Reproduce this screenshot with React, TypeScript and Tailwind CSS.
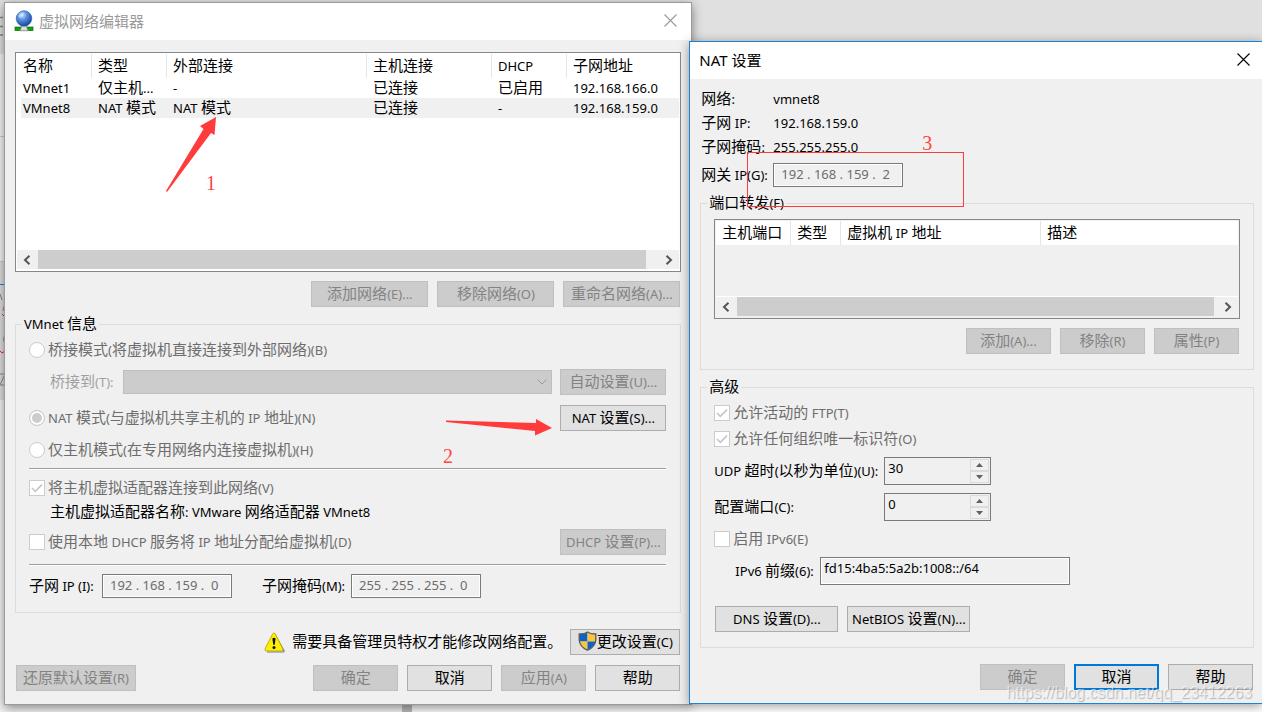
import { ReactNode } from "react";
import clsx from "clsx";

// Latin runs are set a little smaller than the Chinese text around them
const Txt = ({ children }: { children: string }) => (
  <>
    {children.split(/([\x20-\x7e]+)/).map((part, index) =>
      /^[\x20-\x7e]+$/.test(part) ? (
        <span key={index} className="text-[13px] leading-none">
          {part}
        </span>
      ) : (
        part
      )
    )}
  </>
);

const Button = ({
  label,
  width,
  disabled,
  primary,
  icon,
}: {
  label: string;
  width: string;
  disabled?: boolean;
  primary?: boolean;
  icon?: ReactNode;
}) => (
  <button
    type="button"
    disabled={disabled}
    className={clsx(
      "flex h-[26px] shrink-0 items-center justify-center whitespace-pre pb-0.5",
      width,
      disabled && "border border-[#bfbfbf] bg-[#cccccc] text-[#838383]",
      !disabled && !primary && "border border-[#adadad] bg-[#e1e1e1]",
      primary && "border-2 border-[#0078d7] bg-[#e1e1e1]"
    )}
  >
    {icon}
    <span>
      <Txt>{label}</Txt>
    </span>
  </button>
);

const Radio = ({ label, checked }: { label: string; checked?: boolean }) => (
  <label className="flex h-5 items-center gap-[3px] whitespace-pre text-[#6d6d6d]">
    <input
      type="radio"
      name="mode"
      disabled
      defaultChecked={checked}
      className="size-4 shrink-0 appearance-none rounded-full border border-[#cccccc] bg-white checked:bg-[#cccccc] checked:shadow-[inset_0_0_0_2px_#ffffff]"
    />
    <span className="pb-0.5">
      <Txt>{label}</Txt>
    </span>
  </label>
);

const Checkbox = ({ label, checked }: { label: string; checked?: boolean }) => (
  <label className="flex h-5 items-center gap-[3px] whitespace-pre text-[#6d6d6d]">
    <span className="grid size-4 shrink-0">
      <input
        type="checkbox"
        disabled
        defaultChecked={checked}
        className="col-start-1 row-start-1 size-4 appearance-none border border-[#cccccc] bg-white"
      />
      {checked && (
        <svg viewBox="0 0 16 16" className="pointer-events-none col-start-1 row-start-1 size-4">
          <path d="M3 8 L6.3 11.3 L13 4.6" fill="none" stroke="#c6c6c6" strokeWidth="1.6" />
        </svg>
      )}
    </span>
    <span className="pb-0.5">
      <Txt>{label}</Txt>
    </span>
  </label>
);

const IpInput = ({ id, value }: { id: string; value: string }) => (
  <input
    id={id}
    type="text"
    disabled
    defaultValue={value}
    className="h-6 w-[130px] shrink-0 border border-[#7a7a7a] bg-[#f0f0f0] px-[7px] pb-0.5 text-[13px] text-[#6d6d6d] shadow-[inset_0_0_0_1px_#ffffff]"
  />
);

const Spinner = ({ id, value }: { id: string; value: string }) => (
  <div className="flex h-7 w-[107px] shrink-0 border border-[#7a7a7a] p-px">
    <input
      id={id}
      type="text"
      defaultValue={value}
      className="min-w-0 flex-1 px-0.5 pb-1.5 text-[13px]"
    />
    <div className="flex w-[19px] flex-col">
      <button type="button" aria-label="增加" className="flex flex-1 items-center justify-center border border-[#dadada]">
        <svg viewBox="0 0 7 4" className="h-1 w-[7px]">
          <path d="M3.5 0 L7 4 H0 Z" fill="#606060" />
        </svg>
      </button>
      <button type="button" aria-label="减少" className="flex flex-1 items-center justify-center border border-[#dadada]">
        <svg viewBox="0 0 7 4" className="h-1 w-[7px]">
          <path d="M0 0 H7 L3.5 4 Z" fill="#606060" />
        </svg>
      </button>
    </div>
  </div>
);

const ScrollBar = ({ gap }: { gap: string }) => (
  <div className="flex h-[19px] bg-[#f0f0f0]">
    <button type="button" aria-label="向左滚动" className="flex w-[21px] items-center justify-center pr-0.5">
      <svg viewBox="0 0 8 10" className="h-2.5 w-2">
        <path d="M6.5 0.8 L2 5 L6.5 9.2" fill="none" stroke="#555555" strokeWidth="2" />
      </svg>
    </button>
    <div className="flex-1 bg-[#cdcdcd]" />
    <button type="button" aria-label="向右滚动" className={clsx("flex w-[21px] items-center justify-center", gap)}>
      <svg viewBox="0 0 8 10" className="h-2.5 w-2">
        <path d="M1.5 0.8 L6 5 L1.5 9.2" fill="none" stroke="#555555" strokeWidth="2" />
      </svg>
    </button>
  </div>
);

const CloseButton = () => (
  <button type="button" aria-label="关闭" className="flex size-6 items-center justify-center">
    <svg viewBox="0 0 13 13" className="size-[13px]">
      <path d="M0.5 0.5 L12.5 12.5 M12.5 0.5 L0.5 12.5" stroke="currentColor" strokeWidth="1.1" />
    </svg>
  </button>
);

const Group = ({ title, className, children }: { title: string; className?: string; children: ReactNode }) => (
  <fieldset className={clsx("min-w-0 border border-[#dcdcdc]", className)}>
    <legend className="ml-[6px] h-5 whitespace-pre px-0.5 leading-[18px]">
      <Txt>{title}</Txt>
    </legend>
    <div className="pl-[13px] pr-3.5">{children}</div>
  </fieldset>
);

const Divider = () => <div className="h-0.5 border-t border-[#a0a0a0] bg-white" />;

const GlobeIcon = () => (
  <svg viewBox="0 0 20 22" className="h-[22px] w-5">
    <defs>
      <radialGradient id="globe" cx="0.38" cy="0.28" r="0.75">
        <stop offset="0" stopColor="#d4e8ff" />
        <stop offset="0.4" stopColor="#5b93e0" />
        <stop offset="1" stopColor="#123f9c" />
      </radialGradient>
    </defs>
    <rect x="1" y="17" width="18" height="3.6" fill="#12a012" stroke="#0c6b10" strokeWidth="0.7" />
    <path d="M7.5 15 H12.5 V17 L14 20.8 H6 L7.5 17 Z" fill="#dcdcdc" stroke="#8a8a8a" strokeWidth="0.6" />
    <circle cx="10" cy="8.5" r="7.8" fill="url(#globe)" stroke="#2c5aa8" strokeWidth="0.6" />
    <path d="M4.5 6 Q7 2.5 10 3 Q9 6 6 8 Z" fill="#e8f3ff" opacity="0.5" />
  </svg>
);

const WarningIcon = () => (
  <svg viewBox="0 0 21 21" className="h-[21px] w-[21px]">
    <path d="M10.8 2.2 L20 18.8 Q20.3 20 19 20 H3" fill="none" stroke="#777799" strokeWidth="1.2" />
    <path d="M10 1 Q10.8 1 11.4 2.2 L18.9 17 Q19.3 19 17.6 19 H2.2 Q0.5 19 1 17 L8.5 2.2 Q9.1 1 10 1 Z" fill="#ffee00" stroke="#b8a800" strokeWidth="0.9" />
    <path d="M8.4 6.4 Q10 5 11.6 6.4 L10.8 12.8 H9.2 Z" fill="#111111" />
    <circle cx="10" cy="15.4" r="1.5" fill="#111111" />
  </svg>
);

const ShieldIcon = () => (
  <svg viewBox="0 0 19 20" className="h-5 w-[19px]">
    <defs>
      <clipPath id="shield">
        <path d="M9.5 1.2 Q12.5 3.4 17.6 3.2 V9 Q17.2 15.6 9.5 19 Q1.8 15.6 1.4 9 V3.2 Q6.5 3.4 9.5 1.2 Z" />
      </clipPath>
    </defs>
    <g clipPath="url(#shield)">
      <rect width="9.5" height="10.5" fill="#0d63c4" />
      <rect x="9.5" width="9.5" height="10.5" fill="#ffc23c" />
      <rect y="10.5" width="9.5" height="9.5" fill="#ffc23c" />
      <rect x="9.5" y="10.5" width="9.5" height="9.5" fill="#0d63c4" />
    </g>
    <path d="M9.5 1 Q12.5 3.2 17.8 3 V9 Q17.4 15.8 9.5 19.2 Q1.6 15.8 1.2 9 V3 Q6.5 3.2 9.5 1 Z" fill="none" stroke="#555b60" strokeWidth="1.3" />
  </svg>
);

const networks = [
  { name: "VMnet1", type: "仅主机...", external: "-", host: "已连接", dhcp: "已启用", subnet: "192.168.166.0" },
  { name: "VMnet8", type: "NAT 模式", external: "NAT 模式", host: "已连接", dhcp: "-", subnet: "192.168.159.0" },
];

const details = [
  { label: "网络:", value: "vmnet8" },
  { label: "子网 IP:", value: "192.168.159.0" },
  { label: "子网掩码:", value: "255.255.255.0" },
];

const NetworkEditor = () => (
  <section className="relative min-w-0 flex-[688] border border-[#9a9a9a] bg-[#f0f0f0] shadow-[0_3px_10px_rgba(0,0,0,0.45)]">
    <header className="flex h-[37px] items-center bg-white pb-0.5 pl-[9px] pr-[9px] text-[#999999]">
      <GlobeIcon />
      <h1 className="ml-[5px] flex-1">虚拟网络编辑器</h1>
      <CloseButton />
    </header>

    <div className="px-2.5 pb-[13px] pt-3">
      <div className="flex h-[220px] flex-col border border-[#828790] bg-white p-px pb-0.5">
        <div className="flex-1 pl-1">
          <table className="w-full table-fixed border-separate border-spacing-0 whitespace-pre text-left leading-[18px]">
            <colgroup>
              <col className="w-[71px]" />
              <col className="w-[75px]" />
              <col className="w-[200px]" />
              <col className="w-[125px]" />
              <col className="w-[75px]" />
              <col />
            </colgroup>
            <thead>
              <tr className="h-6">
                {["名称", "类型", "外部连接", "主机连接", "DHCP", "子网地址"].map((title, index) => (
                  <th
                    key={title}
                    className={clsx("pb-0.5 font-normal", index ? "pl-1.5" : "pl-0.5", index < 5 && "border-r border-[#e5e5e5]")}
                  >
                    <Txt>{title}</Txt>
                  </th>
                ))}
              </tr>
            </thead>
            <tbody>
              {networks.map((row, index) => (
                <tr key={row.name} className={clsx("h-5", index === 1 && "bg-[#f0f0f0]")}>
                  <td className="pb-0.5 pl-0.5"><Txt>{row.name}</Txt></td>
                  <td className="pb-0.5 pl-1.5"><Txt>{row.type}</Txt></td>
                  <td className="pb-0.5 pl-1.5"><Txt>{row.external}</Txt></td>
                  <td className="pb-0.5 pl-1.5"><Txt>{row.host}</Txt></td>
                  <td className="pb-0.5 pl-1.5"><Txt>{row.dhcp}</Txt></td>
                  <td className="pb-0.5 pl-1.5"><Txt>{row.subnet}</Txt></td>
                </tr>
              ))}
            </tbody>
          </table>
        </div>
        <ScrollBar gap="ml-3" />
      </div>

      <div className="mt-[9px] flex justify-end gap-[9px] pr-px">
        <Button label="添加网络(E)..." width="w-[117px]" disabled />
        <Button label="移除网络(O)" width="w-[117px]" disabled />
        <Button label="重命名网络(A)..." width="w-[117px]" disabled />
      </div>

      <Group title="VMnet 信息" className="mt-[7px] pb-3.5">
        <div className="pt-1.5">
          <Radio label="桥接模式(将虚拟机直接连接到外部网络)(B)" />
        </div>
        <div className="mt-[9px] flex items-center">
          <label htmlFor="bridge" className="w-[94px] shrink-0 whitespace-pre pb-0.5 pl-[21px] text-[#a0a0a0]">
            <Txt>桥接到(T):</Txt>
          </label>
          <div className="relative min-w-0 flex-1">
            <select id="bridge" disabled className="block h-6 w-full appearance-none border border-[#bfbfbf] bg-[#cccccc] opacity-100" />
            <svg viewBox="0 0 10 6" className="pointer-events-none absolute right-[5px] top-[9px] h-1.5 w-2.5">
              <path d="M0.5 0.5 L5 5 L9.5 0.5" fill="none" stroke="#9a9a9a" />
            </svg>
          </div>
          <div className="ml-2">
            <Button label="自动设置(U)..." width="w-[106px]" disabled />
          </div>
        </div>
        <div className="mt-2.5 flex items-center justify-between">
          <Radio label="NAT 模式(与虚拟机共享主机的 IP 地址)(N)" checked />
          <Button label="NAT 设置(S)..." width="w-[106px]" />
        </div>
        <div className="mb-2 mt-[9px]">
          <Radio label="仅主机模式(在专用网络内连接虚拟机)(H)" />
        </div>
        <Divider />
        <div className="mt-2">
          <Checkbox label="将主机虚拟适配器连接到此网络(V)" checked />
        </div>
        <p className="mt-[3px] h-[21px] whitespace-pre pl-[21px]">
          <Txt>主机虚拟适配器名称: VMware 网络适配器 VMnet8</Txt>
        </p>
        <div className="mb-[9px] mt-[7px] flex items-center justify-between">
          <Checkbox label="使用本地 DHCP 服务将 IP 地址分配给虚拟机(D)" />
          <Button label="DHCP 设置(P)..." width="w-[106px]" disabled />
        </div>
        <Divider />
        <div className="mt-2 flex items-center whitespace-pre">
          <label htmlFor="subnet" className="w-[73px] pb-0.5">
            <Txt>子网 IP (I):</Txt>
          </label>
          <IpInput id="subnet" value="192 . 168 . 159 .  0" />
          <label htmlFor="mask" className="ml-[30px] w-[89px] pb-0.5">
            <Txt>子网掩码(M):</Txt>
          </label>
          <IpInput id="mask" value="255 . 255 . 255 .  0" />
        </div>
      </Group>

      <div className="mt-4 flex items-center justify-end pr-px">
        <WarningIcon />
        <p className="ml-[7px] mr-2 whitespace-nowrap pb-0.5">需要具备管理员特权才能修改网络配置。</p>
        <Button label="更改设置(C)" width="w-[110px]" icon={<ShieldIcon />} />
      </div>

      <div className="mt-2.5 flex gap-[9px] pl-px pr-px">
        <div className="flex-1">
          <Button label="还原默认设置(R)" width="w-[120px]" disabled />
        </div>
        <Button label="确定" width="w-[85px]" disabled />
        <Button label="取消" width="w-[85px]" />
        <Button label="应用(A)" width="w-[85px]" disabled />
        <Button label="帮助" width="w-[85px]" />
      </div>
    </div>

    {/* red marker arrows */}
    <svg viewBox="0 0 50 75" className="absolute left-[161px] top-[114px] h-[75px] w-[50px]">
      <path d="M0 74 L1 75 L45 16 L48.5 18 L50 0 L34 9 L37.5 12 Z" fill="#ff3b3b" />
    </svg>
    <span className="absolute left-[201px] top-[168px] font-['Liberation_Serif',serif] text-xl leading-6 text-[#f44]">1</span>
    <svg viewBox="0 0 106 17" className="absolute left-[441px] top-[416px] h-[17px] w-[106px]">
      <path d="M0 1.5 L90 4 V0 L106 9 L89 16.5 V12 L0 3 Z" fill="#ff3b3b" />
    </svg>
    <span className="absolute left-[438px] top-[441px] font-['Liberation_Serif',serif] text-xl leading-6 text-[#f44]">2</span>
  </section>
);

const NatSettings = () => (
  <section className="relative -ml-[3px] mt-[39px] min-w-0 flex-[573] border-y border-l border-[#1883d7] bg-[#f0f0f0] shadow-[0_2px_10px_rgba(0,0,0,0.4)]">
    <header className="flex h-[37px] items-center justify-between bg-white pb-0.5 pl-[9px] pr-[7px]">
      <h2 className="whitespace-pre">NAT 设置</h2>
      <CloseButton />
    </header>

    <div className="pb-[13px] pl-2.5 pr-2 pt-2">
      <dl>
        {details.map((item) => (
          <div key={item.label} className="flex h-6 items-center whitespace-pre pb-0.5 pl-px">
            <dt className="w-[72px]"><Txt>{item.label}</Txt></dt>
            <dd><Txt>{item.value}</Txt></dd>
          </div>
        ))}
      </dl>
      <div className="mt-1 flex items-center whitespace-pre pl-px">
        <label htmlFor="gateway" className="w-[72px] pb-0.5">
          <Txt>网关 IP(G):</Txt>
        </label>
        <IpInput id="gateway" value="192 . 168 . 159 .  2" />
      </div>

      <Group title="端口转发(F)" className="mt-1.5 pb-[15px]">
        <div className="-mr-px mt-1.5 flex h-[100px] flex-col border border-[#828790] p-px pb-0.5">
          <div className="flex-1 border-b border-white">
            <table className="w-full table-fixed border-separate border-spacing-0 whitespace-pre bg-white text-left leading-[18px]">
              <colgroup>
                <col className="w-[75px]" />
                <col className="w-[50px]" />
                <col className="w-[200px]" />
                <col />
              </colgroup>
              <thead>
                <tr className="h-6">
                  {["主机端口", "类型", "虚拟机 IP 地址", "描述"].map((title, index) => (
                    <th key={title} className={clsx("pb-0.5 pl-1.5 font-normal", index < 3 && "border-r border-[#e5e5e5]")}>
                      <Txt>{title}</Txt>
                    </th>
                  ))}
                </tr>
              </thead>
            </table>
          </div>
          <ScrollBar gap="ml-[3px]" />
        </div>
        <div className="mt-[9px] flex justify-end gap-[9px]">
          <Button label="添加(A)..." width="w-[85px]" disabled />
          <Button label="移除(R)" width="w-[85px]" disabled />
          <Button label="属性(P)" width="w-[85px]" disabled />
        </div>
      </Group>

      <Group title="高级" className="mt-[7px] pb-[15px]">
        <div className="flex flex-col gap-1.5 pt-1.5">
          <Checkbox label="允许活动的 FTP(T)" checked />
          <Checkbox label="允许任何组织唯一标识符(O)" checked />
        </div>
        <div className="mt-2 flex flex-col gap-2 whitespace-pre">
          <div className="flex items-center">
            <label htmlFor="udp" className="w-[170px] pb-0.5">
              <Txt>UDP 超时(以秒为单位)(U):</Txt>
            </label>
            <Spinner id="udp" value="30" />
          </div>
          <div className="flex items-center">
            <label htmlFor="port" className="w-[170px] pb-0.5">
              <Txt>配置端口(C):</Txt>
            </label>
            <Spinner id="port" value="0" />
          </div>
          <Checkbox label="启用 IPv6(E)" />
          <div className="flex items-center">
            <label htmlFor="prefix" className="w-[106px] pb-0.5 pl-[21px]">
              <Txt>IPv6 前缀(6):</Txt>
            </label>
            <input
              id="prefix"
              type="text"
              defaultValue="fd15:4ba5:5a2b:1008::/64"
              className="h-7 w-[250px] border border-[#7a7a7a] px-[3px] pb-1.5 text-[13px] shadow-[inset_0_0_0_1px_#ffffff]"
            />
          </div>
        </div>
        <div className="mt-[21px] flex gap-[9px] pl-px">
          <Button label="DNS 设置(D)..." width="w-[123px]" />
          <Button label="NetBIOS 设置(N)..." width="w-[123px]" />
        </div>
      </Group>

      <div className="mt-4 flex justify-end gap-[9px] pr-px">
        <Button label="确定" width="w-[85px]" disabled />
        <Button label="取消" width="w-[85px]" primary />
        <Button label="帮助" width="w-[85px]" />
      </div>
    </div>

    <div className="absolute left-[57px] top-[110px] h-[55px] w-[217px] border border-[#ff3b3b]" />
    <span className="absolute left-[232px] top-[89px] font-['Liberation_Serif',serif] text-xl leading-6 text-[#f44]">3</span>
    <span className="pointer-events-none absolute bottom-0 right-2.5 font-['Liberation_Sans',sans-serif] text-base leading-5 text-white/60 [text-shadow:1px_1px_1px_rgba(0,0,0,0.25)]">
      https://blog.csdn.net/qq_23412263
    </span>
  </section>
);

// slivers of the page that stays open behind the two windows
const Backdrop = () => (
  <div className="absolute inset-0 flex flex-col bg-[#f4f4f4]">
    <div className="h-[54px] bg-[#e0e0e0]" />
    <div className="h-[83px] border-b border-[#cccccc] bg-[#f6f6f6]" />
    <div className="h-[124px] bg-[#f6f6f6]" />
    <div className="h-[139px] border-t border-[#cccccc] bg-[#e0e0e0]" />
    <div className="flex flex-1 items-end">
      <div className="ml-[402px] h-3 w-2.5 bg-[#bcbcbc]" />
      <div className="h-3 flex-1 bg-white" />
    </div>
    <svg viewBox="0 0 5 400" className="absolute left-0 top-0 h-[400px] w-[5px]">
      <path d="M0 17.5 H3 M0 26.5 H3 M0 35 H3" stroke="#888888" strokeWidth="1.5" />
      <path d="M0 284.5 H5" stroke="#2b7cd3" />
      <path d="M0 294 L2 300 M5 303 L3 311 M5 334 Q2 339 5 345 M0 374 H5 L0 385 H5" fill="none" stroke="#888888" />
      <path d="M2 314 L4 316 L5 315 M0 351 L2 353 L5 351" fill="none" stroke="#ff2020" />
    </svg>
  </div>
);

const App = () => {
  return (
    <main className="relative min-h-screen w-full overflow-hidden font-['Noto_Sans','Noto_Sans_CJK_SC',sans-serif] text-[15px] leading-5 text-black">
      <Backdrop />
      <div className="flex items-start pl-1 pt-0.5">
        <NetworkEditor />
        <NatSettings />
      </div>
    </main>
  );
};

export default App;
